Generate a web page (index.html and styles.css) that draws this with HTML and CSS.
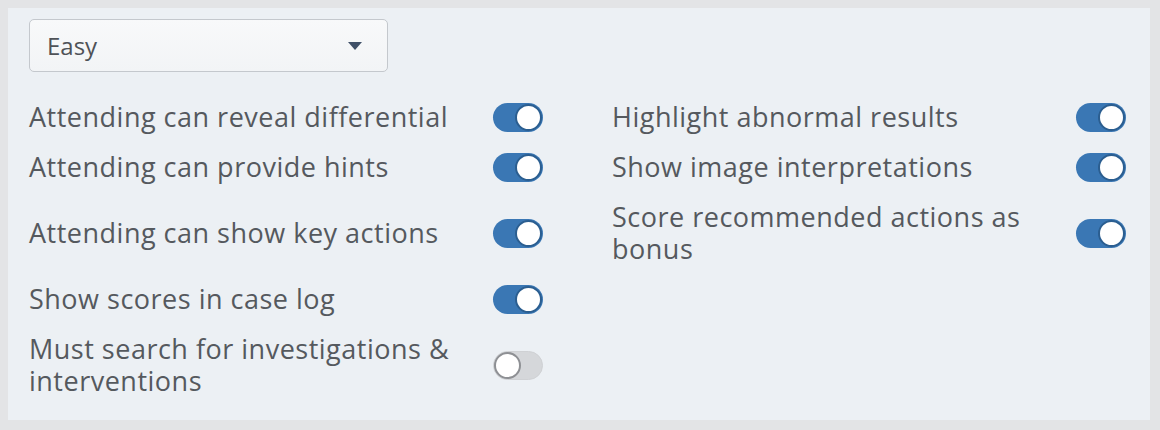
FILE: index.html
```html
<!DOCTYPE html>
<html>
<head>
<meta charset="utf-8">
<link rel="stylesheet" href="styles.css">
</head>
<body>
<div class="panel">
  <div class="select">
    <span class="select-value">Easy</span>
    <span class="caret"></span>
  </div>
  <div class="grid">
    <div class="col">
      <div class="row"><span class="label">Attending can reveal differential</span><span class="toggle on"><span class="knob"></span></span></div>
      <div class="row"><span class="label">Attending can provide hints</span><span class="toggle on"><span class="knob"></span></span></div>
      <div class="row double"><span class="label">Attending can show key actions</span><span class="toggle on"><span class="knob"></span></span></div>
      <div class="row"><span class="label">Show scores in case log</span><span class="toggle on"><span class="knob"></span></span></div>
      <div class="row"><span class="label">Must search for investigations &amp; interventions</span><span class="toggle off"><span class="knob"></span></span></div>
    </div>
    <div class="col">
      <div class="row"><span class="label">Highlight abnormal results</span><span class="toggle on"><span class="knob"></span></span></div>
      <div class="row"><span class="label">Show image interpretations</span><span class="toggle on"><span class="knob"></span></span></div>
      <div class="row double"><span class="label">Score recommended actions as bonus</span><span class="toggle on"><span class="knob"></span></span></div>
    </div>
  </div>
</div>
</body>
</html>
```
FILE: styles.css
```css
html, body {
  margin: 0;
  padding: 0;
}
body {
  background: #e3e4e6;
  padding: 8px 10px 10px 8px;
  font-family: "Open Sans", "Noto Sans", sans-serif;
  color: #55595e;
}
.panel {
  background: #ecf0f4;
  height: 412px;
  box-sizing: border-box;
  padding: 11px 24px 0 21px;
}
.select {
  width: 359px;
  height: 53px;
  box-sizing: border-box;
  border: 1px solid #c4c8cd;
  border-radius: 5px;
  background: linear-gradient(#f8f9fa, #f2f4f6);
  display: flex;
  align-items: center;
  justify-content: space-between;
  padding: 0 25px 0 17px;
}
.select-value {
  font-size: 24px;
  color: #4e5257;
}
.caret {
  width: 0;
  height: 0;
  border-left: 7px solid transparent;
  border-right: 7px solid transparent;
  border-top: 8px solid #3f5068;
}
.grid {
  display: grid;
  grid-template-columns: 514px 514px;
  column-gap: 69px;
  margin-top: 20px;
}
.row {
  display: flex;
  align-items: center;
  justify-content: space-between;
  min-height: 50px;
  box-sizing: border-box;
  padding: 9px 0;
}
.row.double {
  min-height: 82px;
}
.label {
  font-size: 27px;
  letter-spacing: 0.5px;
  line-height: 32px;
  max-width: 440px;
}
.toggle {
  flex: none;
  width: 50px;
  height: 29px;
  border-radius: 15px;
  box-sizing: border-box;
  display: flex;
  align-items: center;
  padding: 0 1px;
}
.toggle.on {
  background: #3a77b4;
  justify-content: flex-end;
}
.toggle.off {
  background: #d5d7da;
  border: 1px solid #cfd1d4;
  justify-content: flex-start;
  padding: 0;
}
.knob {
  width: 27px;
  height: 27px;
  box-sizing: border-box;
  border-radius: 50%;
  background: #ffffff;
}
.toggle.on .knob {
  border: 2px solid #2b5e90;
}
.toggle.off .knob {
  border: 2px solid #8e9094;
}
```
